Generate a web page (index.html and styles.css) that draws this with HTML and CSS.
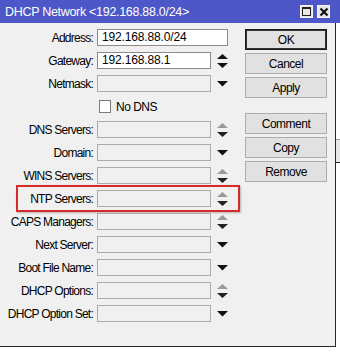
FILE: index.html
```html
<!DOCTYPE html>
<html>
<head>
<meta charset="utf-8">
<link rel="stylesheet" href="styles.css">
</head>
<body>
<div class="window">
  <div class="titlebar">
    <span class="title">DHCP Network &lt;192.168.88.0/24&gt;</span>
    <div class="tb-btns">
      <span class="tb-btn"><span class="max-icon"></span></span>
      <span class="tb-btn"><svg width="10" height="10" viewBox="0 0 10 10"><path d="M1.5 1.5 L8.5 8.5 M8.5 1.5 L1.5 8.5" stroke="#111" stroke-width="2.2"/></svg></span>
    </div>
  </div>
  <div class="body">
    <div class="form">
      <div class="row"><span class="label">Address:</span><div class="field white wide">192.168.88.0/24</div></div>
      <div class="row"><span class="label">Gateway:</span><div class="field white">192.168.88.1</div>
        <svg class="arrow" width="11" height="14" viewBox="0 0 11 14"><polygon points="0,5 5.5,0 11,5" fill="#111"/><polygon points="0,9 11,9 5.5,14" fill="#111"/></svg></div>
      <div class="row"><span class="label">Netmask:</span><div class="field"></div>
        <svg class="arrow" width="11" height="6" viewBox="0 0 11 6"><polygon points="0,0 11,0 5.5,5.5" fill="#111"/></svg></div>
      <div class="row"><span class="label"></span><span class="check"></span><span class="check-text">No DNS</span></div>
      <div class="row"><span class="label">DNS Servers:</span><div class="field"></div>
        <svg class="arrow" width="11" height="14" viewBox="0 0 11 14"><polygon points="0,5 5.5,0 11,5" fill="#9a9a9a"/><polygon points="0,9 11,9 5.5,14" fill="#222"/></svg></div>
      <div class="row"><span class="label">Domain:</span><div class="field"></div>
        <svg class="arrow" width="11" height="6" viewBox="0 0 11 6"><polygon points="0,0 11,0 5.5,5.5" fill="#111"/></svg></div>
      <div class="row"><span class="label">WINS Servers:</span><div class="field"></div>
        <svg class="arrow" width="11" height="14" viewBox="0 0 11 14"><polygon points="0,5 5.5,0 11,5" fill="#9a9a9a"/><polygon points="0,9 11,9 5.5,14" fill="#222"/></svg></div>
      <div class="row highlight"><span class="label">NTP Servers:</span><div class="field"></div>
        <svg class="arrow" width="11" height="14" viewBox="0 0 11 14"><polygon points="0,5 5.5,0 11,5" fill="#9a9a9a"/><polygon points="0,9 11,9 5.5,14" fill="#222"/></svg></div>
      <div class="row"><span class="label">CAPS Managers:</span><div class="field"></div>
        <svg class="arrow" width="11" height="14" viewBox="0 0 11 14"><polygon points="0,5 5.5,0 11,5" fill="#9a9a9a"/><polygon points="0,9 11,9 5.5,14" fill="#222"/></svg></div>
      <div class="row"><span class="label">Next Server:</span><div class="field"></div>
        <svg class="arrow" width="11" height="6" viewBox="0 0 11 6"><polygon points="0,0 11,0 5.5,5.5" fill="#111"/></svg></div>
      <div class="row"><span class="label">Boot File Name:</span><div class="field"></div>
        <svg class="arrow" width="11" height="6" viewBox="0 0 11 6"><polygon points="0,0 11,0 5.5,5.5" fill="#111"/></svg></div>
      <div class="row"><span class="label">DHCP Options:</span><div class="field"></div>
        <svg class="arrow" width="11" height="14" viewBox="0 0 11 14"><polygon points="0,5 5.5,0 11,5" fill="#9a9a9a"/><polygon points="0,9 11,9 5.5,14" fill="#222"/></svg></div>
      <div class="row"><span class="label">DHCP Option Set:</span><div class="field"></div>
        <svg class="arrow" width="11" height="6" viewBox="0 0 11 6"><polygon points="0,0 11,0 5.5,5.5" fill="#111"/></svg></div>
    </div>
    <div class="buttons">
      <div class="btn default">OK</div>
      <div class="btn">Cancel</div>
      <div class="btn">Apply</div>
      <div class="btn group">Comment</div>
      <div class="btn">Copy</div>
      <div class="btn">Remove</div>
    </div>
  </div>
  <div class="behind"></div>
</div>
</body>
</html>
```
FILE: styles.css
```css
* { box-sizing: border-box; }
html, body {
  margin: 0;
  padding: 0;
  background: #ffffff;
}
body {
  width: 340px;
  height: 352px;
  overflow: hidden;
  font-family: "Liberation Sans", Arial, sans-serif;
  font-size: 12px;
  letter-spacing: -0.5px;
  color: #000;
}
.window {
  position: relative;
  width: 340px;
}
.titlebar {
  height: 23px;
  background: #4d57c8;
  display: flex;
  align-items: center;
  justify-content: space-between;
  padding: 0 10px 0 5px;
}
.title {
  color: #fff;
  font-size: 12.5px;
  letter-spacing: -0.3px;
  padding-top: 1px;
}
.tb-btns {
  display: flex;
  gap: 4px;
}
.tb-btn {
  width: 13px;
  height: 13px;
  background: #e6e6e6;
  border: 1px solid #f4f4f4;
  display: flex;
  align-items: center;
  justify-content: center;
}
.max-icon {
  width: 9px;
  height: 9px;
  border: 1px solid #222;
  border-top-width: 2px;
}
.body {
  width: 336px;
  height: 324px;
  background: #f0f0f0;
  border-right: 1px solid #2a2a2a;
  border-bottom: 1px solid #2a2a2a;
  display: flex;
  padding-top: 6px;
}
.form {
  position: relative;
  width: 240px;
  display: flex;
  flex-direction: column;
  gap: 6px;
}
.row {
  position: relative;
  height: 17px;
  display: flex;
  align-items: center;
}
.label {
  width: 93px;
  text-align: right;
  margin-right: 4px;
  white-space: nowrap;
  letter-spacing: -0.75px;
}
.field {
  width: 114px;
  height: 17px;
  border: 1px solid #ababab;
  background: #f0f0f0;
  padding: 0 0 0 4px;
  line-height: 15px;
  white-space: nowrap;
  letter-spacing: -0.15px;
}
.field.white {
  background: #fff;
  border-color: #8a8a8a;
}
.field.wide {
  width: 131px;
}
.arrow {
  margin-left: 6px;
}
.check {
  width: 12px;
  height: 13px;
  margin-left: 2px;
  border: 1px solid #7a7a7a;
  background: #fff;
}
.check-text {
  margin-left: 5px;
}
.highlight::after {
  content: "";
  position: absolute;
  left: 16px;
  right: 0;
  top: -5px;
  bottom: -5px;
  border: 2px solid #d42a2a;
  box-shadow: 1px 1px 2px rgba(0, 0, 0, 0.25);
}
.buttons {
  margin-left: 5px;
  width: 82px;
  display: flex;
  flex-direction: column;
  gap: 3px;
}
.btn {
  height: 21px;
  border: 1px solid #adadad;
  background: #e1e1e1;
  display: flex;
  align-items: center;
  justify-content: center;
}
.btn.default {
  border: 1px solid #1a1a1a;
  box-shadow: inset 0 0 0 1px #333;
}
.btn.group {
  margin-top: 12px;
}
.behind {
  position: absolute;
  left: 336px;
  top: 139px;
  width: 4px;
  height: 24px;
  background: #e8e8e8;
  border-top: 1px solid #999;
  border-bottom: 1px solid #222;
}
```
